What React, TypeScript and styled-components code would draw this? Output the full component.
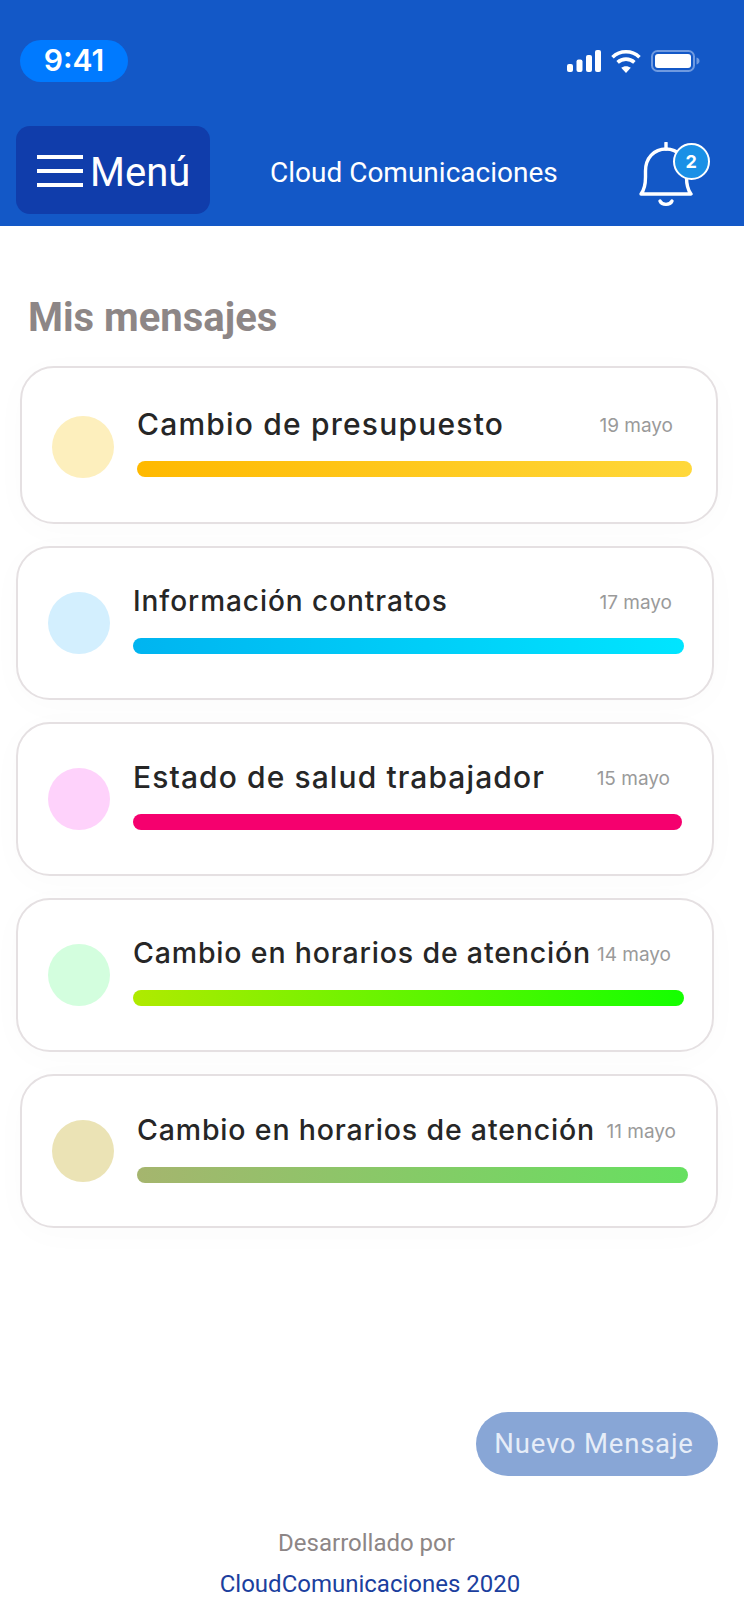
import React from 'react';
import styled, { createGlobalStyle } from 'styled-components';

const GlobalStyle = createGlobalStyle`
  html, body { margin: 0; padding: 0; background: #fff; }
  * { box-sizing: border-box; }
`;

const Page = styled.div`
  width: 744px;
  height: 1620px;
  display: flex;
  flex-direction: column;
  background: #fff;
  overflow: hidden;
  font-family: Roboto, sans-serif;
`;

const Header = styled.header`
  height: 226px;
  background: #1358c7;
  padding: 40px 44px 12px 16px;
  display: flex;
  flex-direction: column;
  justify-content: space-between;
`;

const StatusBar = styled.div`
  display: flex;
  align-items: center;
  justify-content: space-between;
  padding-left: 4px;
`;

const Time = styled.div`
  width: 108px;
  height: 42px;
  border-radius: 21px;
  background: #007aff;
  color: #fff;
  font: 600 30px/41px Inter, sans-serif;
  text-align: center;
`;

const StatusIcons = styled.div`
  display: flex;
  align-items: center;
  gap: 10px;
`;

const NavBar = styled.div`
  display: flex;
  align-items: center;
`;

const MenuButton = styled.div`
  width: 194px;
  height: 88px;
  border-radius: 14px;
  background: #103dab;
  padding: 2px 0 0 21px;
  display: flex;
  align-items: center;
  gap: 7px;
  color: #fff;
  font-size: 40px;
  line-height: 50px;
`;

const MenuLabel = styled.span`
  padding-top: 3px;
`;

const Burger = styled.div`
  width: 46px;
  height: 32px;
  display: flex;
  flex-direction: column;
  justify-content: space-between;
  span { display: block; height: 4px; background: #fff; }
`;

const NavTitle = styled.div`
  margin: 4px 0 0 60px;
  color: #fff;
  font-size: 28px;
`;

const Bell = styled.div`
  position: relative;
  margin: 9px 0 0 81px;
  width: 54px;
  height: 66px;
`;

const Badge = styled.div`
  position: absolute;
  left: 34px;
  top: 1px;
  width: 37px;
  height: 37px;
  border-radius: 50%;
  background: #1a90e6;
  border: 2px solid #fff;
  color: #fff;
  font: 700 18px/33px Inter, sans-serif;
  text-align: center;
`;

const Heading = styled.h1`
  margin: 69px 0 0 28px;
  color: #8d8686;
  font: 700 40px/46px Roboto, sans-serif;
`;

const CardList = styled.div`
  margin-top: 25px;
  display: flex;
  flex-direction: column;
  gap: 22px;
`;

const Card = styled.div<{ $left: number; $height: number }>`
  width: 698px;
  height: ${p => p.$height}px;
  margin-left: ${p => p.$left}px;
  padding-left: 30px;
  border: 2px solid #e5e0e2;
  border-radius: 34px;
  background: #fff;
  box-shadow: 0 6px 36px rgba(0, 0, 0, 0.02);
  display: flex;
  align-items: flex-start;
  gap: 23px;
`;

const Dot = styled.div<{ $color: string; $top: number }>`
  width: 62px;
  height: 62px;
  margin-top: ${p => p.$top}px;
  border-radius: 50%;
  flex: none;
  background: ${p => p.$color};
`;

const CardBody = styled.div<{ $top: number }>`
  flex: 1;
  min-width: 0;
  margin-top: ${p => p.$top}px;
`;

const CardTop = styled.div<{ $dateRight: number }>`
  height: 44px;
  display: flex;
  align-items: center;
  justify-content: space-between;
  padding-right: ${p => p.$dateRight}px;
`;

const CardTitle = styled.div<{ $size: number; $spacing: number }>`
  color: #262626;
  font: 500 ${p => p.$size}px/44px Inter, sans-serif;
  letter-spacing: ${p => p.$spacing}px;
  white-space: nowrap;
`;

const CardDate = styled.div`
  padding-top: 3px;
  color: #9a9a9a;
  font: 400 19px/44px Inter, sans-serif;
  white-space: nowrap;
`;

const Bar = styled.div<{ $width: number; $from: string; $to: string }>`
  margin-top: 15px;
  width: ${p => p.$width}px;
  height: 16px;
  border-radius: 8px;
  background: linear-gradient(90deg, ${p => p.$from}, ${p => p.$to});
`;

const NewButton = styled.div`
  margin: auto 26px 0 auto;
  width: 242px;
  height: 64px;
  padding-right: 6px;
  border-radius: 32px;
  background: #88a6d6;
  color: #e6edf8;
  font-size: 27.5px;
  letter-spacing: 0.8px;
  line-height: 64px;
  text-align: center;
`;

const Footer = styled.footer`
  margin-top: 47px;
  padding-bottom: 15px;
  width: 742px;
  text-align: center;
  font-size: 24px;
  line-height: 41px;
`;

const FooterLine = styled.div<{ $color: string; $shift?: number }>`
  color: ${p => p.$color};
  padding-right: ${p => p.$shift ?? 0}px;
`;

const messages = [
  { title: 'Cambio de presupuesto', date: '19 mayo', dot: '#fdefbd', from: '#ffb900', to: '#ffd83b', left: 20, height: 158, size: 30, spacing: 1.2, barWidth: 555, dateRight: 43, dotTop: 48, bodyTop: 34 },
  { title: 'Información contratos', date: '17 mayo', dot: '#d3effe', from: '#00b4f0', to: '#00e5ff', left: 16, height: 154, size: 28, spacing: 0.95, barWidth: 551, dateRight: 40, dotTop: 44, bodyTop: 31 },
  { title: 'Estado de salud trabajador', date: '15 mayo', dot: '#fed2fb', from: '#f5006e', to: '#f5006e', left: 16, height: 154, size: 30, spacing: 1.1, barWidth: 549, dateRight: 42, dotTop: 44, bodyTop: 31 },
  { title: 'Cambio en horarios de atención', date: '14 mayo', dot: '#d3fede', from: '#b0ea00', to: '#14ff00', left: 16, height: 154, size: 28.5, spacing: 0.83, barWidth: 551, dateRight: 41, dotTop: 44, bodyTop: 31 },
  { title: 'Cambio en horarios de atención', date: '11 mayo', dot: '#ebe3b5', from: '#a5b56e', to: '#66e060', left: 20, height: 154, size: 28.5, spacing: 0.83, barWidth: 551, dateRight: 40, dotTop: 44, bodyTop: 32 },
];

const SignalIcon = () => (
  <svg width="34" height="22" viewBox="0 0 34 22" fill="#fff">
    <rect x="0" y="14" width="6" height="8" rx="2" />
    <rect x="9.5" y="9.500" width="6" height="12.500" rx="2" />
    <rect x="19" y="5" width="6" height="17" rx="2" />
    <rect x="28" y="0" width="6" height="22" rx="2" />
  </svg>
);

const WifiIcon = () => (
  <svg width="30" height="23" viewBox="0 0 30 23" fill="none" stroke="#fff" strokeWidth="3.6">
    <path d="M1.5 7.200C9 0 21 0 28.500 7.200" />
    <path d="M6.600 12.400C11.400 8 18.600 8 23.400 12.400" />
    <path d="M15 23l-4.800-5.200c2.700-2.200 6.900-2.200 9.600 0z" fill="#fff" stroke="none" />
  </svg>
);

const BatteryIcon = () => (
  <svg width="49" height="22" viewBox="0 0 49 22">
    <rect x="1" y="1" width="42" height="20" rx="5.500" fill="none" stroke="#6f9ae0" strokeWidth="2" />
    <rect x="4" y="4" width="36" height="14" rx="3" fill="#fff" />
    <path d="M45.500 7.500c2 .6 3 1.900 3 3.500s-1 2.900-3 3.500z" fill="#6f9ae0" />
  </svg>
);

const BellIcon = () => (
  <svg width="54" height="66" viewBox="0 0 54 66" fill="none" stroke="#fff" strokeWidth="3.4" strokeLinecap="round" strokeLinejoin="round">
    <path d="M27 1v6" />
    <path d="M2 52c4-5 4.500-10 4.500-17v-6C6.500 16 15 7 27 7s20.500 9 20.500 22v6c0 7 .5 12 4.500 17z" />
    <path d="M21 59c2 4.500 10 4.500 12 0" />
  </svg>
);

export default function App() {
  return (
    <Page>
      <GlobalStyle />
      <Header>
        <StatusBar>
          <Time>9:41</Time>
          <StatusIcons>
            <SignalIcon />
            <WifiIcon />
            <BatteryIcon />
          </StatusIcons>
        </StatusBar>
        <NavBar>
          <MenuButton>
            <Burger>
              <span />
              <span />
              <span />
            </Burger>
            <MenuLabel>Menú</MenuLabel>
          </MenuButton>
          <NavTitle>Cloud Comunicaciones</NavTitle>
          <Bell>
            <BellIcon />
            <Badge>2</Badge>
          </Bell>
        </NavBar>
      </Header>
      <Heading>Mis mensajes</Heading>
      <CardList>
        {messages.map((m, i) => (
          <Card key={i} $left={m.left} $height={m.height}>
            <Dot $color={m.dot} $top={m.dotTop} />
            <CardBody $top={m.bodyTop}>
              <CardTop $dateRight={m.dateRight}>
                <CardTitle $size={m.size} $spacing={m.spacing}>{m.title}</CardTitle>
                <CardDate>{m.date}</CardDate>
              </CardTop>
              <Bar $width={m.barWidth} $from={m.from} $to={m.to} />
            </CardBody>
          </Card>
        ))}
      </CardList>
      <NewButton>Nuevo Mensaje</NewButton>
      <Footer>
        <FooterLine $color="#8d8686" $shift={9}>Desarrollado por</FooterLine>
        <FooterLine $color="#1c3f9e" $shift={2}>CloudComunicaciones 2020</FooterLine>
      </Footer>
    </Page>
  );
}
